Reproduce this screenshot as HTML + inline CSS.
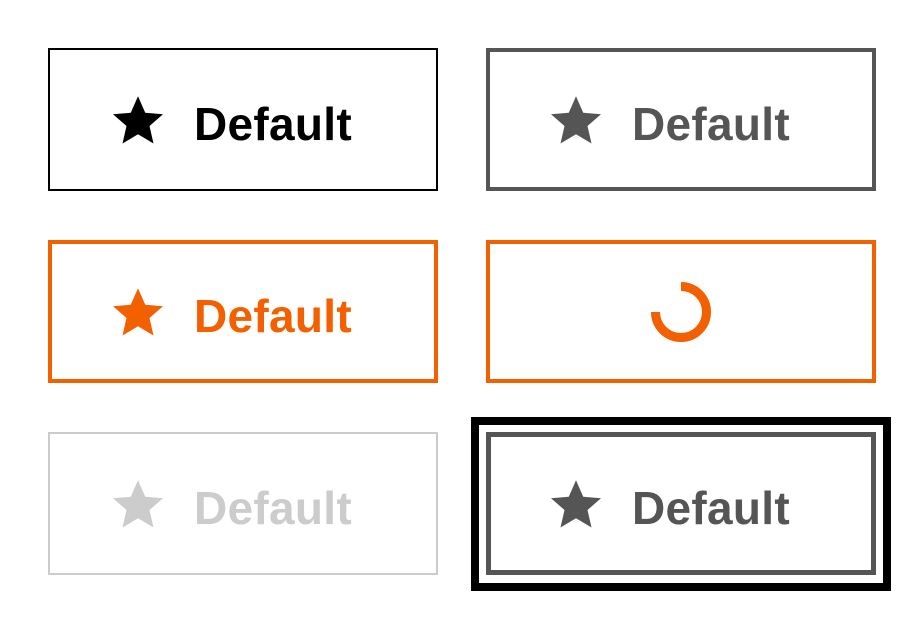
<!DOCTYPE html>
<html><head><style>
body{margin:0;width:924px;height:624px;background:#fff;position:relative;font-family:"Liberation Sans",sans-serif;}
.b{position:absolute;box-sizing:border-box;width:390px;height:143px;}
.t{position:absolute;font-weight:bold;font-size:46px;line-height:46px;letter-spacing:0.3px;white-space:nowrap}
.s{position:absolute;width:60px;height:60px}
</style></head><body>
<svg width="0" height="0" style="position:absolute"><defs><path id="st" d="M12 2.5l2.9 6.6 7.1.6-5.4 4.7 1.6 7-6.2-3.7-6.2 3.7 1.6-7L2 9.7l7.1-.6z"/></defs></svg>
<div class="b" style="left:48px;top:48px;border:2px solid #000"></div>
<svg class="s" style="left:108px;top:90px" viewBox="0 0 24 24"><use href="#st" fill="#000"/></svg>
<div class="t" style="left:194px;top:101px;color:#000">Default</div>

<div class="b" style="left:486px;top:48px;border:4px solid #555"></div>
<svg class="s" style="left:546px;top:90px" viewBox="0 0 24 24"><use href="#st" fill="#555"/></svg>
<div class="t" style="left:632px;top:101px;color:#555">Default</div>

<div class="b" style="left:48px;top:240px;border:4px solid #f26000"></div>
<svg class="s" style="left:108px;top:282px" viewBox="0 0 24 24"><use href="#st" fill="#f26000"/></svg>
<div class="t" style="left:194px;top:293px;color:#f26000">Default</div>

<div class="b" style="left:486px;top:240px;border:4px solid #f26000;"></div>
<svg style="position:absolute;left:651px;top:282px" width="60" height="60" viewBox="0 0 60 60"><path d="M30 4.5A25.5 25.5 0 1 1 4.5 30" fill="none" stroke="#f26000" stroke-width="9"/></svg>

<div class="b" style="left:48px;top:432px;border:2px solid #ccc"></div>
<svg class="s" style="left:108px;top:474px" viewBox="0 0 24 24"><use href="#st" fill="#ccc"/></svg>
<div class="t" style="left:194px;top:485px;color:#ccc">Default</div>

<div style="position:absolute;left:471px;top:417px;width:420px;height:174px;box-sizing:border-box;border:8px solid #000"></div>
<div class="b" style="left:486px;top:432px;border:5px solid #555"></div>
<svg class="s" style="left:546px;top:474px" viewBox="0 0 24 24"><use href="#st" fill="#555"/></svg>
<div class="t" style="left:632px;top:485px;color:#555">Default</div>
</body></html>
